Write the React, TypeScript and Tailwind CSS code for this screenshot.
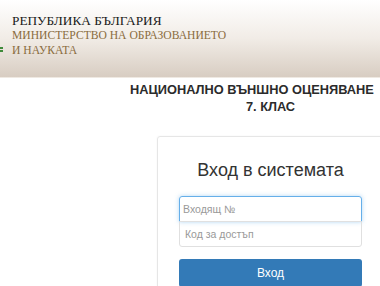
import React from 'react';

export default function App() {
  return (
    <div className="w-[380px] h-[286px] overflow-hidden bg-white font-['Liberation_Sans',Arial,sans-serif] text-[#333]">
      {/* Header */}
      <header className="h-[78px] bg-gradient-to-b from-white via-[#f1ece6] to-[#d8cdc2] border-b border-[#efe9e2] relative">
        <div className="absolute left-0 top-[47px] flex flex-col gap-[1px]">
          <span className="block w-[3px] h-[2px] bg-[#3f8a3a]" />
          <span className="block w-[3px] h-[2px] bg-[#3f8a3a]" />
        </div>
        <div className="pl-[12px] pt-[13px] font-['Liberation_Serif','Times_New_Roman',serif] leading-[15px]">
          <div className="text-[13.3px] text-[#1a1a1a]">РЕПУБЛИКА БЪЛГАРИЯ</div>
          <div className="text-[11.6px] text-[#8a6c3e]">МИНИСТЕРСТВО НА ОБРАЗОВАНИЕТО</div>
          <div className="text-[11.6px] text-[#8a6c3e]">И НАУКАТА</div>
        </div>
      </header>

      {/* Title */}
      <div className="pt-[3px]">
        <h1 className="ml-[130px] whitespace-nowrap font-bold text-[12.8px] leading-[18px] text-[#2b2b2b]">
          НАЦИОНАЛНО ВЪНШНО ОЦЕНЯВАНЕ
        </h1>
        <div className="ml-[157px] w-[227px] text-center font-bold text-[12.8px] leading-[16px] text-[#2b2b2b]">
          7. КЛАС
        </div>
      </div>

      {/* Login card */}
      <div className="ml-[157px] mt-[21px] w-[227px] border border-[#e6e6e6] rounded-[3px] px-[21px] pt-[20px] pb-4 shadow-[0_0_2px_rgba(0,0,0,0.05)]">
        <h2 className="text-center text-[18px] leading-[26px] text-[#333]">Вход в системата</h2>
        <div className="mt-[13px] flex flex-col">
          <input
            className="h-[26px] px-[3px] text-[10.5px] border border-[#66afe9] rounded-t-[3px] outline-none shadow-[0_0_4px_rgba(102,175,233,0.5)] placeholder:text-[#999]"
            placeholder="Входящ №"
          />
          <input
            className="h-[26px] px-[5px] -mt-px text-[10.5px] border border-[#e0e0e0] rounded-b-[3px] outline-none placeholder:text-[#999]"
            placeholder="Код за достъп"
          />
        </div>
        <button className="mt-[12px] w-full h-[28px] rounded-[3px] bg-[#337ab7] text-white text-[12px]">
          Вход
        </button>
      </div>
    </div>
  );
}
